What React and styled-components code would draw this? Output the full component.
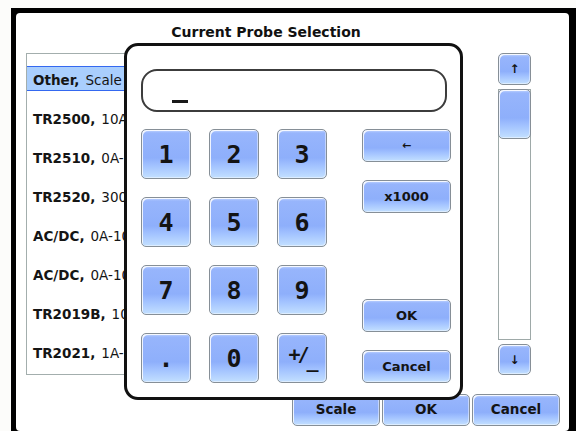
import React from "react";
import styled, { createGlobalStyle } from "styled-components";

const GlobalStyle = createGlobalStyle`
  html, body {
    margin: 0;
    padding: 0;
    background: #fcfcfa;
    overflow: hidden;
  }
  body {
    font-family: "DejaVu Sans", "Liberation Sans", sans-serif;
  }
`;

const Frame = styled.div`
  margin: 8px 0 0 11px;
  width: 565px;
  box-sizing: border-box;
  padding: 5px 7px 5px 5px;
  background: #000;
`;

const Screen = styled.div`
  position: relative;
  height: 418px;
  background: #fff;
  border-radius: 4px;
  display: flex;
  flex-direction: column;
  padding-left: 10px;
  box-sizing: border-box;
`;

const Title = styled.div`
  width: 400px;
  margin-left: 40px;
  padding-top: 10px;
  line-height: 18px;
  text-align: center;
  font-size: 14px;
  font-weight: bold;
  color: #111;
`;

const MainRow = styled.div`
  display: flex;
  gap: 50px;
  margin-top: 12px;
`;

const List = styled.div`
  width: 422px;
  height: 322px;
  box-sizing: border-box;
  border: 1px solid #a3aead;
  padding-top: 12px;
  overflow: hidden;
`;

const Row = styled.div`
  height: 25px;
  margin: 0 0 14px ${(p) => (p.$selected ? "-2px" : "0")};
  padding: 3px 0 0 ${(p) => (p.$selected ? "7px" : "5px")};
  box-sizing: border-box;
  display: flex;
  align-items: center;
  white-space: nowrap;
  font-size: 13.5px;
  color: #151515;
  background: ${(p) => (p.$selected ? "#a9cefd" : "transparent")};
  border: 1px solid ${(p) => (p.$selected ? "#3468f0" : "transparent")};
  border-right-width: ${(p) => (p.$selected ? "1px" : "0")};
`;

const Name = styled.b`
  font-weight: bold;
  margin-right: 6px;
`;

const Scrollbar = styled.div`
  width: 33px;
  height: 322px;
  display: flex;
  flex-direction: column;
  gap: 4px;
`;

const Key = styled.button`
  box-sizing: border-box;
  width: ${(p) => p.$w || 50}px;
  height: ${(p) => p.$h || 50}px;
  padding: 0;
  border: 1px solid #868f97;
  border-radius: 5px;
  background: linear-gradient(
    180deg,
    #c3d6ff 0px,
    #97b5fc 3px,
    #8eaffb 58%,
    #a2c2ff 74%,
    #c3e0ff 100%
  );
  box-shadow: inset 2px 2px 0 -1px rgba(255, 255, 255, 0.85),
    inset -1px -1px 0 rgba(255, 255, 255, 0.45);
  color: #141414;
  font-family: ${(p) =>
    p.$digit ? '"DejaVu Sans Mono", "Liberation Mono", monospace' : '"DejaVu Sans", sans-serif'};
  font-size: ${(p) => p.$size || 13}px;
  font-weight: bold;
  line-height: 1;
  display: flex;
  align-items: center;
  justify-content: center;
  cursor: pointer;
`;

const Track = styled.div`
  flex: 1;
  box-sizing: border-box;
  border: 1px solid #9ea9a8;
  display: flex;
  flex-direction: column;
`;

const Thumb = styled(Key)`
  margin: -1px -1px 0;
  flex: none;
`;

const BottomRow = styled.div`
  display: flex;
  justify-content: flex-end;
  gap: 2px;
  margin-top: 19px;
  padding-right: 9px;
`;

const Dialog = styled.div`
  position: absolute;
  left: 108px;
  top: 30px;
  width: 339px;
  height: 357px;
  box-sizing: border-box;
  border: 3px solid #111;
  border-radius: 14px;
  background: #fff;
  padding: 23px 0 0 14px;
  z-index: 2;
`;

const Display = styled.div`
  width: 306px;
  height: 43px;
  box-sizing: border-box;
  border: 2px solid #3c3c3c;
  border-radius: 16px;
  display: flex;
  align-items: flex-end;
  padding: 0 0 7px 29px;
`;

const Cursor = styled.span`
  display: block;
  width: 16px;
  height: 3px;
  background: #1a1a1a;
`;

const Keypad = styled.div`
  display: flex;
  gap: 35px;
  margin-top: 17px;
`;

const NumGrid = styled.div`
  display: grid;
  grid-template-columns: repeat(3, 50px);
  grid-auto-rows: 50px;
  gap: 18px;
`;

const Side = styled.div`
  width: 89px;
  height: 254px;
  display: flex;
  flex-direction: column;
  justify-content: space-between;
`;

const Group = styled.div`
  display: flex;
  flex-direction: column;
  gap: 18px;
`;

const PlusMinus = styled.span`
  display: inline-flex;
  align-items: flex-start;
  font-size: 20px;
  letter-spacing: -3px;
  margin-top: -2px;
  span:last-child {
    margin-top: 6px;
  }
`;

const probes = [
  ["Other,", "Scale 1000"],
  ["TR2500,", "10A-500A"],
  ["TR2510,", "0A-10A"],
  ["TR2520,", "300A-1000A"],
  ["AC/DC,", "0A-100A"],
  ["AC/DC,", "0A-1000A"],
  ["TR2019B,", "10A-1000A"],
  ["TR2021,", "1A-100A"],
];

const digits = ["1", "2", "3", "4", "5", "6", "7", "8", "9", "."];

function App() {
  return (
    <>
      <GlobalStyle />
      <Frame>
        <Screen>
          <Title>Current Probe Selection</Title>
          <MainRow>
            <List>
              {probes.map(([name, range], i) => (
                <Row key={i} $selected={i === 0}>
                  <Name>{name}</Name>
                  {range}
                </Row>
              ))}
            </List>
            <Scrollbar>
              <Key $w={33} $h={32} $size={12}>↑</Key>
              <Track>
                <Thumb $w={33} $h={50} />
              </Track>
              <Key $w={33} $h={31} $size={12}>↓</Key>
            </Scrollbar>
          </MainRow>
          <BottomRow>
            <Key $w={88} $h={32} $size={13.5}>Scale</Key>
            <Key $w={88} $h={32} $size={13.5}>OK</Key>
            <Key $w={88} $h={32} $size={13.5}>Cancel</Key>
          </BottomRow>

          <Dialog>
            <Display>
              <Cursor />
            </Display>
            <Keypad>
              <NumGrid>
                {digits.map((d) => (
                  <Key key={d} $digit $size={25}>{d}</Key>
                ))}
                <Key $digit $size={25}>0</Key>
                <Key $digit>
                  <PlusMinus>
                    <span>+</span>
                    <span>/</span>
                    <span>_</span>
                  </PlusMinus>
                </Key>
              </NumGrid>
              <Side>
                <Group>
                  <Key $w={89} $h={33} $size={11}>←</Key>
                  <Key $w={89} $h={33} $size={13}>x1000</Key>
                </Group>
                <Group>
                  <Key $w={89} $h={33} $size={13}>OK</Key>
                  <Key $w={89} $h={33} $size={13}>Cancel</Key>
                </Group>
              </Side>
            </Keypad>
          </Dialog>
        </Screen>
      </Frame>
    </>
  );
}

export default App;
